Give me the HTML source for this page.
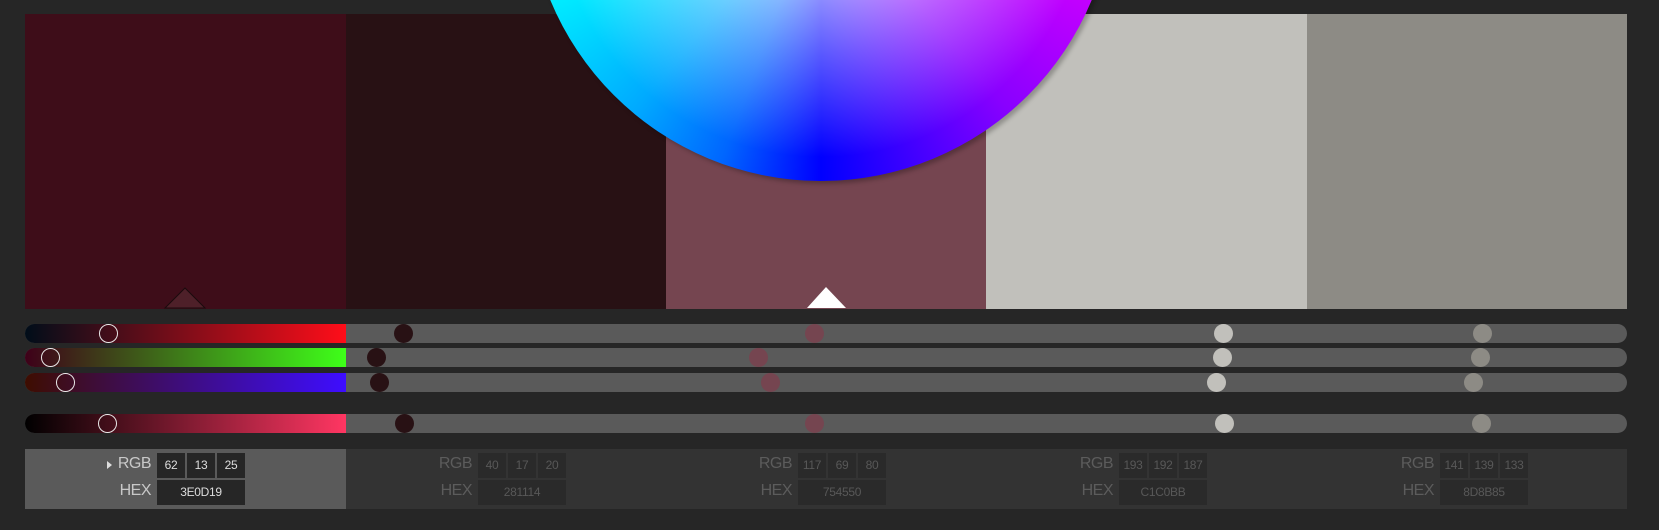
<!DOCTYPE html>
<html><head><meta charset="utf-8"><style>
*{margin:0;padding:0;box-sizing:border-box}
body{width:1659px;height:530px;background:#262626;position:relative;overflow:hidden;font-family:"Liberation Sans",sans-serif}
.sw{position:absolute;top:14px;height:295px}
.tr{position:absolute;left:25px;width:1602px;height:19px;border-radius:10px;background:#5a5a5a;overflow:hidden}
.tr .g{position:absolute;left:0;top:0;bottom:0;width:321px}
.k{position:absolute;width:19px;height:19px;border-radius:50%;margin-left:-9.5px}
.k.h{border:1.5px solid #e8e8e8}
.panel{position:absolute;top:449px;height:60px;width:321px;background:#333}
.lab{position:absolute;left:0;width:126px;text-align:right;font-size:16px;color:#5c5c5c;letter-spacing:-0.5px}
.b{position:absolute;background:#2a2a2a;color:#585858;font-size:12px;text-align:center;line-height:25px;height:25px;letter-spacing:-0.3px}
.act .lab{color:#c8c8c8}.act .b{background:#262626;color:#ddd}
</style></head><body>
<div class="sw" style="left:25px;width:321px;background:#3E0D19"></div>
<div class="sw" style="left:346px;width:320px;background:#281114"></div>
<div class="sw" style="left:666px;width:320px;background:#754550"></div>
<div class="sw" style="left:986px;width:321px;background:#C1C0BB"></div>
<div class="sw" style="left:1307px;width:320px;background:#8D8B85"></div>
<svg style="position:absolute;left:0;top:0" width="1659" height="320">
<polygon points="165,308 185,288 205,308" fill="#4e2029" stroke="#1a0a0d" stroke-width="1"/>
<polygon points="807,308 826,287 846,308" fill="#fff"/>
</svg>
<div style="position:absolute;left:531px;top:-402px;width:586px;height:586px;border-radius:50%;background:rgba(0,0,0,0.25);filter:blur(2px)"></div>
<div style="position:absolute;left:528px;top:-405px;width:586px;height:586px;border-radius:50%;background:conic-gradient(from 0deg,#ff0 0deg,#f00 40deg,#f0f 85deg,#80f 140deg,#00f 180deg,#06f 200deg,#0af 220deg,#0ff 255deg,#0f8 315deg,#ff0 360deg)"></div>
<div style="position:absolute;left:528px;top:-405px;width:586px;height:586px;border-radius:50%;background:radial-gradient(circle,rgba(255,255,255,0.95) 0%,rgba(255,255,255,0.35) 40%,rgba(255,255,255,0) 65%)"></div>

<div class="tr" style="top:324px"><div class="g" style="background:linear-gradient(90deg,#000d19,#ff0d19)"></div></div>
<div class="tr" style="top:348px"><div class="g" style="background:linear-gradient(90deg,#3e0019,#3eff19)"></div></div>
<div class="tr" style="top:373px"><div class="g" style="background:linear-gradient(90deg,#3e0d00,#3e0dff)"></div></div>
<div class="tr" style="top:414px"><div class="g" style="background:linear-gradient(90deg,#000,#ff3662)"></div></div>

<div class="k h" style="left:108px;top:324px"></div><div class="k" style="left:403px;top:324px;background:#281114"></div><div class="k" style="left:814px;top:324px;background:#754550"></div><div class="k" style="left:1223px;top:324px;background:#C1C0BB"></div><div class="k" style="left:1482px;top:324px;background:#8D8B85"></div>
<div class="k h" style="left:50px;top:348px"></div><div class="k" style="left:376px;top:348px;background:#281114"></div><div class="k" style="left:758px;top:348px;background:#754550"></div><div class="k" style="left:1222px;top:348px;background:#C1C0BB"></div><div class="k" style="left:1480px;top:348px;background:#8D8B85"></div>
<div class="k h" style="left:65px;top:373px"></div><div class="k" style="left:379px;top:373px;background:#281114"></div><div class="k" style="left:770px;top:373px;background:#754550"></div><div class="k" style="left:1216px;top:373px;background:#C1C0BB"></div><div class="k" style="left:1473px;top:373px;background:#8D8B85"></div>
<div class="k h" style="left:107px;top:414px"></div><div class="k" style="left:404px;top:414px;background:#281114"></div><div class="k" style="left:814px;top:414px;background:#754550"></div><div class="k" style="left:1224px;top:414px;background:#C1C0BB"></div><div class="k" style="left:1481px;top:414px;background:#8D8B85"></div>

<div class="panel act" style="left:25px;background:#5a5a5a">
<div style="position:absolute;left:82px;top:12px;width:0;height:0;border-left:5px solid #ddd;border-top:4.5px solid transparent;border-bottom:4.5px solid transparent"></div>
<div class="lab" style="top:6px">RGB</div><div class="lab" style="top:33px">HEX</div>
<div class="b" style="left:132px;top:4px;width:28px">62</div><div class="b" style="left:162px;top:4px;width:28px">13</div><div class="b" style="left:192px;top:4px;width:28px">25</div>
<div class="b" style="left:132px;top:31px;width:88px">3E0D19</div></div>
<div class="panel" style="left:346px"><div class="lab" style="top:6px">RGB</div><div class="lab" style="top:33px">HEX</div>
<div class="b" style="left:132px;top:4px;width:28px">40</div><div class="b" style="left:162px;top:4px;width:28px">17</div><div class="b" style="left:192px;top:4px;width:28px">20</div><div class="b" style="left:132px;top:31px;width:88px">281114</div></div>
<div class="panel" style="left:666px"><div class="lab" style="top:6px">RGB</div><div class="lab" style="top:33px">HEX</div>
<div class="b" style="left:132px;top:4px;width:28px">117</div><div class="b" style="left:162px;top:4px;width:28px">69</div><div class="b" style="left:192px;top:4px;width:28px">80</div><div class="b" style="left:132px;top:31px;width:88px">754550</div></div>
<div class="panel" style="left:986px"><div class="lab" style="top:6px;width:127px">RGB</div><div class="lab" style="top:33px;width:127px">HEX</div>
<div class="b" style="left:133px;top:4px;width:28px">193</div><div class="b" style="left:163px;top:4px;width:28px">192</div><div class="b" style="left:193px;top:4px;width:28px">187</div><div class="b" style="left:133px;top:31px;width:88px">C1C0BB</div></div>
<div class="panel" style="left:1307px;width:320px"><div class="lab" style="top:6px;width:127px">RGB</div><div class="lab" style="top:33px;width:127px">HEX</div>
<div class="b" style="left:133px;top:4px;width:28px">141</div><div class="b" style="left:163px;top:4px;width:28px">139</div><div class="b" style="left:193px;top:4px;width:28px">133</div><div class="b" style="left:133px;top:31px;width:88px">8D8B85</div></div>
</body></html>
